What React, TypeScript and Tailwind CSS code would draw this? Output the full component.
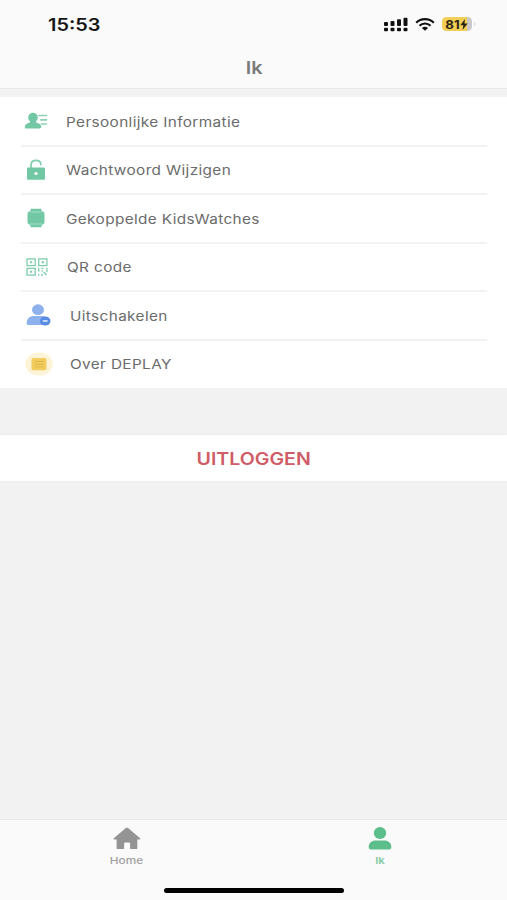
import type { ReactNode } from 'react';

function PersonCard() {
  return (
    <svg width="24" height="18" viewBox="0 0 24 18" fill="#72c8a4" className="block">
      <ellipse cx="9" cy="5.600" rx="4.800" ry="4.900" />
      <path d="M6 9h6v1.600c3.300.700 5.200 2.100 5.200 4.200 0 1.100-.600 1.700-1.600 1.700H2.400C1.400 16.500.800 16 .800 15c0-2.100 1.900-3.700 5.200-4.400z" />
      <path d="M15 3.500h7.500M16.800 7.800h5.700M17.500 12h5" stroke="#8bd2b4" strokeWidth="1.700" strokeLinecap="round" />
    </svg>
  );
}

function Lock() {
  return (
    <svg width="20" height="22" viewBox="0 0 20 22" className="block">
      <path d="M5 10V6.400C5 3.300 7 1.300 10 1.300s4.800 1.700 4.800 4.300" fill="none" stroke="#80cdae" strokeWidth="1.700" strokeLinecap="round" />
      <rect x="1" y="8.500" width="18" height="12.200" rx="1.300" fill="#72c8a4" />
      <ellipse cx="10" cy="14.500" rx="1.700" ry="1.600" fill="#fff" />
    </svg>
  );
}

function Watch() {
  return (
    <svg width="18" height="20" viewBox="0 0 18 20" className="block">
      <path d="M4 .700h10l1.500 3.600h-13zM2.500 15.700h13L14 19.300H4z" fill="#72c8a4" />
      <rect x=".500" y="3.200" width="17" height="13.600" rx="3.200" fill="#72c8a4" />
      <path d="M3 4h12M3 16h12" stroke="#b5e2cf" strokeWidth=".800" />
    </svg>
  );
}

function QrCode() {
  return (
    <svg width="22" height="18" viewBox="0 0 22 18" fill="none" stroke="#80cdae" strokeWidth="1.300" className="block">
      <rect x="1" y=".900" width="8.200" height="6.700" />
      <rect x="12.700" y=".900" width="8.200" height="6.700" />
      <rect x="1" y="10.400" width="8.200" height="6.700" />
      <path d="M4 4.200h2.200M15.700 4.200h2.200M4 13.700h2.200" strokeWidth="2" />
      <path d="M12.700 9.700v4M12.700 16v1.700M15.300 10.400h2M16.300 12.300v1.500M17.500 14l3.200 3M20.900 9.700v4.300M15 17h2" />
    </svg>
  );
}

function DisableUser() {
  return (
    <svg width="26" height="22" viewBox="0 0 26 22" className="block">
      <ellipse cx="12" cy="5.700" rx="6" ry="5.400" fill="#8db1ec" />
      <path d="M.700 19.200C.700 14.600 3.700 12 8 12h7.500c3.500 0 6 1.700 7 4.500L18 21H2.300c-1.100 0-1.600-.600-1.600-1.800z" fill="#8db1ec" />
      <ellipse cx="19.200" cy="17" rx="5.300" ry="4.600" fill="#5a8be2" />
      <rect x="16.600" y="15.900" width="5.200" height="2.100" rx="1" fill="#c5d8f8" />
    </svg>
  );
}

function About() {
  return (
    <svg width="28" height="24" viewBox="0 0 28 24" className="block">
      <ellipse cx="14" cy="12" rx="13.700" ry="11.600" fill="#fdf3d6" />
      <rect x="6.500" y="6" width="15" height="12.200" rx="1.800" fill="#f2cc5c" />
      <path d="M10 9.400h8.500M10 12.200h8.500M10 15h8.500" stroke="#e0b548" strokeWidth=".900" />
    </svg>
  );
}

type Item = { label: string; icon: ReactNode; iconPad: string; gap: string };

const items: Item[] = [
  { label: 'Persoonlijke Informatie', icon: <PersonCard />, iconPad: 'pl-6', gap: 'w-[66px]' },
  { label: 'Wachtwoord Wijzigen', icon: <Lock />, iconPad: 'pl-[26px]', gap: 'w-[66px]' },
  { label: 'Gekoppelde KidsWatches', icon: <Watch />, iconPad: 'pl-[27px]', gap: 'w-[66px]' },
  { label: 'QR code', icon: <QrCode />, iconPad: 'pl-[26px]', gap: 'w-[67px]' },
  { label: 'Uitschakelen', icon: <DisableUser />, iconPad: 'pl-[26px]', gap: 'w-[70px]' },
  { label: 'Over DEPLAY', icon: <About />, iconPad: 'pl-[25px]', gap: 'w-[70px]' },
];

function StatusBar() {
  return (
    <div className="flex h-12 items-center justify-between pl-[48px] pr-[32px]">
      <span className="mt-[3px] origin-left scale-x-[1.17] text-[17px] font-semibold text-[#151515]">15:53</span>
      <div className="flex items-center">
        <svg width="24" height="15" viewBox="0 0 24 15" fill="#111" className="mr-[7px]">
          <rect x="0" y="5" width="4" height="4" rx="1" />
          <rect x="6.500" y="4" width="4" height="5" rx="1" />
          <rect x="13" y="2.300" width="4" height="6.700" rx="1" />
          <rect x="19.500" y=".800" width="4" height="8.200" rx="1" />
          <rect x="0" y="10.700" width="4" height="3.500" rx="1" />
          <rect x="6.500" y="10.700" width="4" height="3.500" rx="1" />
          <rect x="13" y="10.700" width="4" height="3.500" rx="1" />
          <rect x="19.500" y="10.700" width="4" height="3.500" rx="1" />
        </svg>
        <svg width="20" height="13" viewBox="0 0 20 13" className="mr-[7px]">
          <path d="M1.200 4.700C6-.100 14-.100 18.800 4.700M4.500 7.700c3-3 8-3 11 0" fill="none" stroke="#111" strokeWidth="2.100" />
          <path d="M6.900 10c1.700-1.600 4.500-1.600 6.200 0L10 12.800z" fill="#111" />
        </svg>
        <div className="flex h-[14px] w-[30px] items-center justify-center rounded-[4.500px] bg-[linear-gradient(90deg,#f3cf58_82%,#c9c9cc_82%)]">
          <span className="scale-x-110 pt-px text-[12px] font-bold leading-none text-[#2b2510]">81</span>
          <svg width="8" height="11" viewBox="0 0 8 11" fill="#2b2510" className="ml-px">
            <path d="M5 0 .300 6.200h3L2.500 11 7.700 4.500H4.500z" />
          </svg>
        </div>
        <div className="ml-[2px] h-1 w-px rounded-r bg-[#d5d5d7]" />
      </div>
    </div>
  );
}

export default function App() {
  return (
    <div className="flex h-[900px] w-[507px] flex-col overflow-hidden bg-[#f2f2f2] font-['Inter','Liberation_Sans',sans-serif]">
      <header className="h-[89px] shrink-0 border-b border-[#e9e9e9] bg-[#fafafa]">
        <StatusBar />
        <h1 className="flex h-10 items-center justify-center pl-[2px] pt-[2px] text-[17px] font-semibold text-[#7b7b7b]">
          <span className="scale-x-[1.17]">Ik</span>
        </h1>
      </header>

      <main className="flex flex-1 flex-col pt-2">
        <ul className="bg-white">
          {items.map((item, i) => (
            <li key={item.label} className="relative flex h-[48.500px] items-center">
              <div className={`${item.gap} ${item.iconPad} shrink-0`}>{item.icon}</div>
              <span className="mt-[2px] origin-left scale-x-[1.18] whitespace-nowrap text-[13px] tracking-[0.024em] text-[#6b6b6b]">{item.label}</span>
              {i < items.length - 1 && <div className="absolute -bottom-px left-[21px] right-[20px] h-[2px] bg-[#f2f2f2]" />}
            </li>
          ))}
        </ul>
        <button className="mt-[47px] flex h-[46px] items-center justify-center bg-white pt-[4px] text-[17px] font-semibold text-[#cf5c66] shadow-[0_0_3px_rgba(0,0,0,0.06)]">
          <span className="scale-x-[1.15]">UITLOGGEN</span>
        </button>
      </main>

      <nav className="flex h-[81px] shrink-0 flex-col border-t border-[#e9e9e9] bg-[#fafafa]">
        <div className="grid h-[68px] grid-cols-2">
          <div className="flex flex-col items-center pt-[7px] text-[#949494]">
            <svg width="28" height="23" viewBox="0 0 28 23" fill="currentColor">
              <path d="M12.800 1.100c.700-.600 1.600-.600 2.300 0L26.800 11c.900.800.500 1.600-.500 1.600h-2v8.300c0 .800-.500 1.200-1.400 1.200h-5.800v-5.500c0-.700-.400-1.100-1.200-1.100h-3.600c-.800 0-1.200.400-1.200 1.100v5.500H5c-.900 0-1.400-.400-1.400-1.200v-8.300h-2c-1 0-1.400-.800-.500-1.600z" />
            </svg>
            <span className="mt-[4px] scale-x-[1.24] text-[9.500px] font-medium leading-[14px] text-[#a0a0a0]">Home</span>
          </div>
          <div className="flex flex-col items-center pt-[7px] text-[#5cbe8a]">
            <svg width="24" height="23" viewBox="0 0 24 23" fill="currentColor">
              <ellipse cx="12" cy="6" rx="6.200" ry="5.900" />
              <path d="M.700 19.800c0-4 3-6.300 7-6.300h8.600c4 0 7 2.300 7 6.300 0 1.700-.700 2.700-2.200 2.700H2.900C1.400 22.500.700 21.500.700 19.800z" />
            </svg>
            <span className="mt-[4px] scale-x-[1.2] text-[9.500px] font-semibold leading-[14px] text-[#7fcba3]">Ik</span>
          </div>
        </div>
        <div className="ml-[164px] h-[4.500px] w-[180px] rounded-full bg-black" />
      </nav>
    </div>
  );
}
